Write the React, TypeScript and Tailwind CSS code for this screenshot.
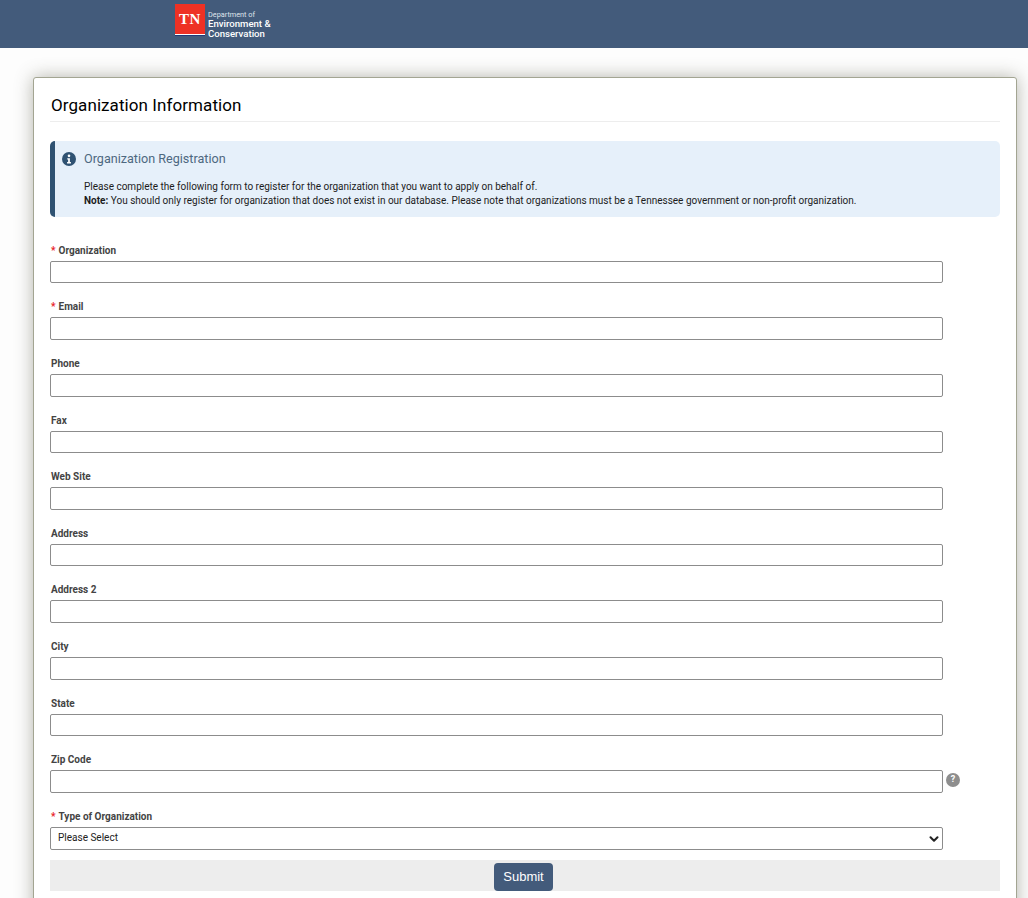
import { ChevronDown } from 'lucide-react'

const fields = [
  { label: 'Organization', required: true },
  { label: 'Email', required: true },
  { label: 'Phone' },
  { label: 'Fax' },
  { label: 'Web Site' },
  { label: 'Address' },
  { label: 'Address 2' },
  { label: 'City' },
  { label: 'State' },
  { label: 'Zip Code', help: true }
]

function FieldLabel({ label, required }: { label: string; required?: boolean }) {
  return (
    <div className="flex h-[23px] items-center pl-px pt-[3px] text-[10px] font-bold leading-none text-[#444444]">
      {required && <span className="mr-[3px] text-[#e8202a]">*</span>}
      {label}
    </div>
  )
}

export default function App() {
  return (
    <div className="h-[898px] overflow-hidden bg-[#fdfdfd] font-['Roboto',sans-serif]">
      {/* header */}
      <header className="h-12 bg-[#435b7b] pl-[175px] pt-1">
        <div className="flex items-start gap-[3px]">
          <div className="flex h-[32px] w-[30px] flex-col bg-[#ee3124]">
            <div className="flex flex-1 items-center justify-center font-['Liberation_Serif',serif] text-[15px] font-bold tracking-[0.5px] text-white">
              TN
            </div>
            <div className="h-[1px] bg-white" />
            <div className="h-[1px] bg-[#1f3a78]" />
          </div>
          <div className="pt-[7px] text-white">
            <div className="text-[7.3px] leading-[8px] text-[#dfe4ec]">Department of</div>
            <div className="text-[9.6px] font-medium leading-[10px]">Environment &amp;</div>
            <div className="text-[9.6px] font-medium leading-[10px]">Conservation</div>
          </div>
        </div>
      </header>

      <main className="pl-[33px] pr-[11px] pt-[29px]">
        <div className="rounded-[3px] border border-[#a3a592] bg-white px-4 pt-[15px] shadow-[0_0_18px_rgba(90,90,70,0.45)]">
          <h1 className="border-b border-[#ededed] pb-[4px] pl-px text-[17px] font-normal leading-[24px] tracking-[0.08px] text-black">
            Organization Information
          </h1>

          <div className="mt-[19px] h-[76px] rounded-[5px] border-l-[5px] border-[#2f5272] bg-[#e6f0fa] pl-[7px] pt-[10px]">
            <div className="flex items-center gap-2">
              <svg viewBox="0 0 16 16" className="h-[14px] w-[14px]">
                <circle cx="8" cy="8" r="8" fill="#2f5272" />
                <circle cx="8" cy="4.4" r="1.5" fill="#fff" />
                <path d="M6 7h3v4.4h1.2V13H5.8v-1.6H7V8.5H6z" fill="#fff" />
              </svg>
              <span className="text-[12.6px] leading-[16px] text-[#4d6880]">Organization Registration</span>
            </div>
            <div className="mt-[13px] pl-[22px] text-[10px] leading-[14px] text-[#1c1c1c]">
              <p>Please complete the following form to register for the organization that you want to apply on behalf of.</p>
              <p>
                <b>Note:</b> You should only register for organization that does not exist in our database. Please note that organizations must be a Tennessee government or non-profit organization.
              </p>
            </div>
          </div>

          <form className="mt-[20.8px]">
            {fields.map((f) => (
              <div key={f.label} className="h-[56.6px]">
                <FieldLabel label={f.label} required={f.required} />
                <div className="relative w-[893px]">
                  <input className="block h-[22.6px] w-full rounded-[2px] border border-[#8c8c8c] bg-white" />
                  {f.help && (
                    <span className="absolute left-[896px] top-[3px] flex h-[14px] w-[14px] items-center justify-center rounded-full bg-[#8e8e8e] text-[9px] font-bold text-white">
                      ?
                    </span>
                  )}
                </div>
              </div>
            ))}
            <FieldLabel label="Type of Organization" required />
            <div className="relative h-[23px] w-[893px] rounded-[2px] border border-[#8c8c8c] bg-white pl-[7px] text-[10px] leading-[20px] text-[#222]">
              Please Select
              <ChevronDown className="absolute right-[1px] top-[4px] h-[14px] w-[14px] text-[#222]" strokeWidth={3.5} />
            </div>
            <div className="mt-[10px] flex h-[31px] justify-center bg-[#ededed] pt-[3px]">
              <button type="button" className="mr-[3px] h-[28px] w-[59px] rounded-[4px] bg-[#435b7b] font-['Liberation_Sans',sans-serif] text-[13px] text-white">
                Submit
              </button>
            </div>
          </form>
          <div className="h-8" />
        </div>
      </main>
    </div>
  )
}
